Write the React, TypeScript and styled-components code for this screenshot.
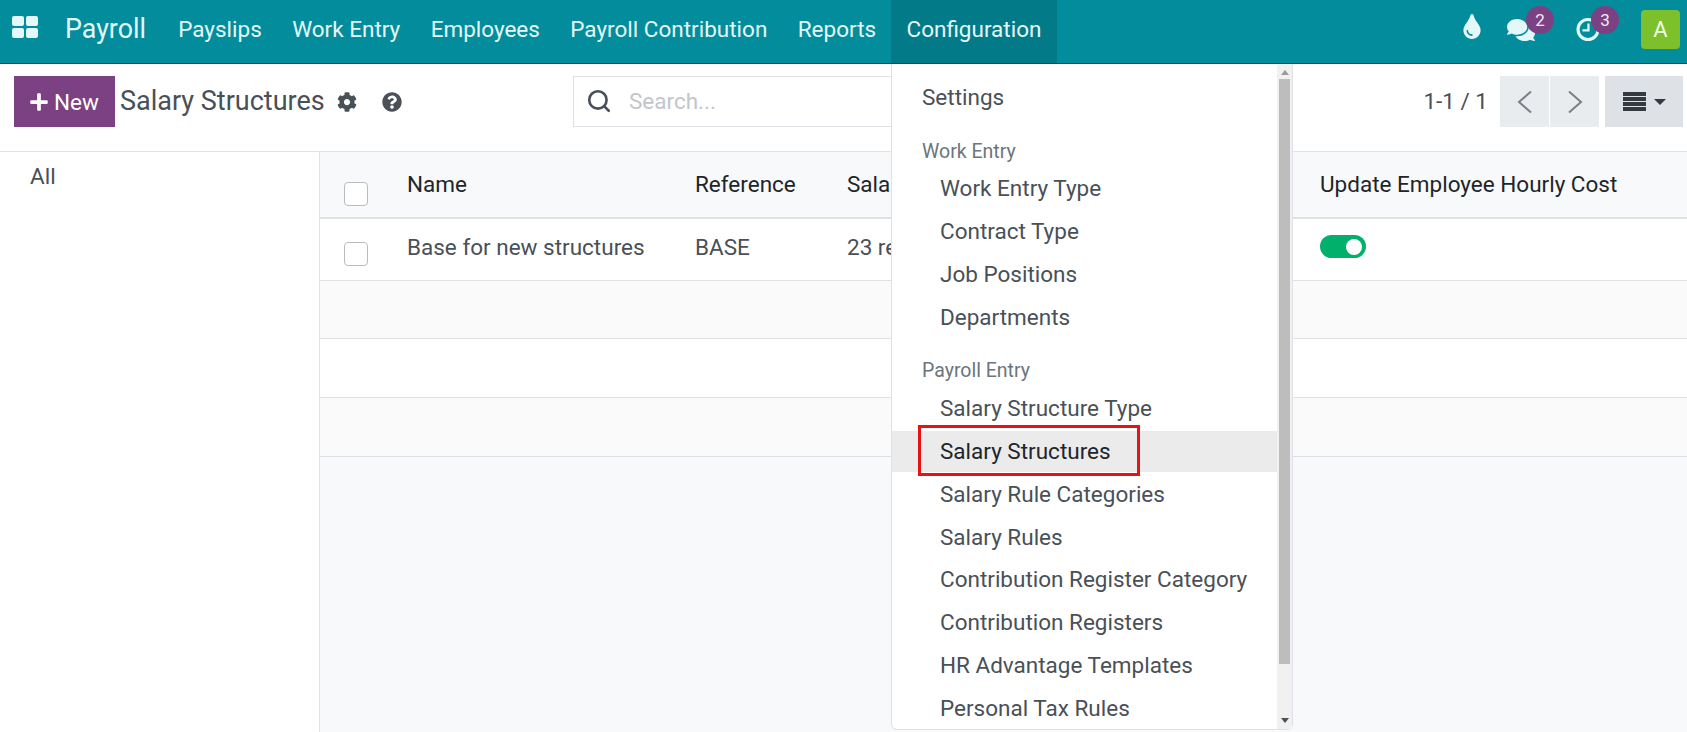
import styled, { createGlobalStyle } from "styled-components";
import { FaTint, FaComments, FaCog, FaQuestionCircle, FaPlus } from "react-icons/fa";
import { Search } from "lucide-react";

const GlobalStyle = createGlobalStyle`
  html, body {
    margin: 0;
    padding: 0;
    height: 100%;
    background: #fff;
    overflow: hidden;
  }
  * { box-sizing: border-box; }
  body {
    font-family: Roboto, "Liberation Sans", sans-serif;
    color: #495057;
  }
`;

const navItems = ["Payslips", "Work Entry", "Employees", "Payroll Contribution", "Reports"];

const App = () => {
  return (
    <Page>
      <GlobalStyle />
      <Navbar>
        <AppsButton aria-label="Apps">
          <svg width="26" height="22" viewBox="0 0 26 22" fill="#e4f8f9">
            <rect x="0" y="0" width="12" height="10" rx="2" />
            <rect x="14" y="0" width="12" height="10" rx="2" />
            <rect x="0" y="12" width="12" height="10" rx="2" />
            <rect x="14" y="12" width="12" height="10" rx="2" />
          </svg>
        </AppsButton>
        <Brand>Payroll</Brand>
        {navItems.map((item) => (
          <NavItem key={item}>{item}</NavItem>
        ))}
        <NavItem $active>Configuration</NavItem>
        <Systray>
          <TrayIcon $width={18} $lift={6}>
            <FaTint size={25} />
          </TrayIcon>
          <TrayIcon $width={28} $gap={26}>
            <FaComments size={28} />
            <Badge $left={19}>2</Badge>
          </TrayIcon>
          <TrayIcon $width={24} $gap={41}>
            <svg width="25" height="25" viewBox="0 0 26 26" fill="none" stroke="#e4f8f9" strokeWidth="3.4">
              <circle cx="13" cy="13" r="10.8" />
              <path d="M13.5 6.5v7.5H7" strokeWidth="2.4" />
            </svg>
            <Badge $left={15}>3</Badge>
          </TrayIcon>
          <Avatar>A</Avatar>
        </Systray>
      </Navbar>

      <ControlPanel>
        <TitleGroup>
          <NewButton>
            <FaPlus size={20} />
            New
          </NewButton>
          <Title>Salary Structures</Title>
          <FaCog size={20} />
          <HelpIcon size={20} />
        </TitleGroup>
        <SearchBox>
          <Search size={26} strokeWidth={2.4} color="#495057" />
          <SearchText>Search...</SearchText>
        </SearchBox>
        <Pager>1-1 / 1</Pager>
        <PagerButton $side="left">
          <svg width="16" height="24" viewBox="0 0 16 24" fill="none" stroke="#7b7f83" strokeWidth="2">
            <path d="M14 1.5 2 12l12 10.500" />
          </svg>
        </PagerButton>
        <PagerButton $side="right">
          <svg width="16" height="24" viewBox="0 0 16 24" fill="none" stroke="#7b7f83" strokeWidth="2">
            <path d="M2 1.500 14 12 2 22.500" />
          </svg>
        </PagerButton>
        <ViewButton>
          <svg width="23" height="19" viewBox="0 0 23 19" fill="#343a40">
            <rect y="0" width="23" height="4" />
            <rect y="5" width="23" height="4" />
            <rect y="10" width="23" height="4" />
            <rect y="15" width="23" height="4" />
          </svg>
          <Caret />
        </ViewButton>
      </ControlPanel>

      <Body>
        <Sidebar>
          <SidebarItem>All</SidebarItem>
        </Sidebar>
        <ListArea>
          <HeadRow>
            <Cell>
              <CheckBox $offset={20} />
            </Cell>
            <HeadCell>Name</HeadCell>
            <HeadCell>Reference</HeadCell>
            <HeadCell>Sala</HeadCell>
            <HeadCell>Update Employee Hourly Cost</HeadCell>
          </HeadRow>
          <DataRow>
            <Cell>
              <CheckBox $offset={15} />
            </Cell>
            <DataCell>Base for new structures</DataCell>
            <DataCell>BASE</DataCell>
            <DataCell>23 re</DataCell>
            <Cell>
              <Toggle />
            </Cell>
          </DataRow>
          <EmptyRow $shade $height={58} />
          <EmptyRow $height={59} />
          <EmptyRow $shade $height={59} />
        </ListArea>
      </Body>

      <Menu>
        <MenuList>
          <MenuEntry>Settings</MenuEntry>
          <MenuHeader>Work Entry</MenuHeader>
          <MenuEntry $sub>Work Entry Type</MenuEntry>
          <MenuEntry $sub>Contract Type</MenuEntry>
          <MenuEntry $sub>Job Positions</MenuEntry>
          <MenuEntry $sub>Departments</MenuEntry>
          <MenuHeader>Payroll Entry</MenuHeader>
          <MenuEntry $sub>Salary Structure Type</MenuEntry>
          <MenuEntry $sub $selected>
            Salary Structures
            <RedBox />
          </MenuEntry>
          <MenuEntry $sub>Salary Rule Categories</MenuEntry>
          <MenuEntry $sub>Salary Rules</MenuEntry>
          <MenuEntry $sub>Contribution Register Category</MenuEntry>
          <MenuEntry $sub>Contribution Registers</MenuEntry>
          <MenuEntry $sub>HR Advantage Templates</MenuEntry>
          <MenuEntry $sub>Personal Tax Rules</MenuEntry>
        </MenuList>
        <ScrollTrack>
          <ScrollArrow $up />
          <ScrollThumb />
          <ScrollArrow />
        </ScrollTrack>
      </Menu>
    </Page>
  );
};

const Page = styled.div`
  position: relative;
  width: 1687px;
  height: 732px;
  overflow: hidden;
  display: flex;
  flex-direction: column;
`;

const Navbar = styled.header`
  height: 64px;
  flex: none;
  display: flex;
  align-items: stretch;
  background: #028c9c;
  border-bottom: 1px solid #035560;
  color: #e4f8f9;
  font-size: 22.5px;
`;

const AppsButton = styled.div`
  width: 65px;
  display: flex;
  padding: 16px 0 0 12px;
`;

const Brand = styled.div`
  font-size: 26.800px;
  display: flex;
  align-items: center;
  margin-right: 17px;
  padding-bottom: 5px;
`;

const NavItem = styled.div<{ $active?: boolean }>`
  display: flex;
  align-items: center;
  padding: 0 15.200px 6px;
  background: ${(p) => (p.$active ? "#027a88" : "transparent")};
`;

const Systray = styled.div`
  margin-left: auto;
  display: flex;
  align-items: center;
  padding: 0 7px 4px 0;
`;

const TrayIcon = styled.div<{ $width: number; $gap?: number; $lift?: number }>`
  position: relative;
  width: ${(p) => p.$width}px;
  height: 26px;
  margin-left: ${(p) => p.$gap ?? 0}px;
  margin-bottom: ${(p) => p.$lift ?? 0}px;
  display: flex;
  align-items: center;
  justify-content: center;
`;

const Badge = styled.span<{ $left: number }>`
  position: absolute;
  top: -10.500px;
  left: ${(p) => p.$left}px;
  width: 28px;
  height: 28px;
  border-radius: 50%;
  background: #7c4182;
  color: #f3e9f4;
  font-size: 17px;
  display: flex;
  align-items: center;
  justify-content: center;
`;

const Avatar = styled.div`
  width: 39px;
  height: 39px;
  margin-left: 41px;
  border-radius: 4px;
  background: #7cc02b;
  color: #f4fbe9;
  font-size: 22px;
  display: flex;
  align-items: center;
  justify-content: center;
`;

const ControlPanel = styled.div`
  height: 88px;
  flex: none;
  display: flex;
  align-items: flex-start;
  padding: 12px 4px 0 14px;
  background: #fff;
  border-bottom: 1px solid #dee2e6;
`;

const TitleGroup = styled.div`
  flex: 0 0 559px;
  height: 51px;
  display: flex;
  align-items: center;
  color: #495057;
`;

const NewButton = styled.div`
  width: 101px;
  height: 51px;
  background: #7c4182;
  color: #fff;
  font-size: 22.500px;
  display: flex;
  align-items: center;
  gap: 5px;
  padding-left: 15px;
`;

const Title = styled.div`
  font-size: 27px;
  margin: 0 12px 2px 5px;
  color: #495057;
`;

const HelpIcon = styled(FaQuestionCircle)`
  margin-left: 25px;
`;

const SearchBox = styled.div`
  width: 707px;
  height: 51px;
  border: 1px solid #dee2e6;
  display: flex;
  align-items: center;
  padding: 0 0 2px 12px;
  gap: 17px;
`;

const SearchText = styled.span`
  font-size: 22.500px;
  color: #c1c6cb;
`;

const Pager = styled.div`
  margin-left: auto;
  height: 51px;
  display: flex;
  align-items: center;
  font-size: 22.500px;
  margin-right: 12px;
  padding-bottom: 2px;
`;

const PagerButton = styled.div<{ $side: "left" | "right" }>`
  width: ${(p) => (p.$side === "left" ? 50 : 49)}px;
  height: 51px;
  background: #e9ecef;
  border-right: ${(p) => (p.$side === "left" ? "1px solid #fff" : "none")};
  display: flex;
  align-items: center;
  justify-content: center;
`;

const ViewButton = styled.div`
  width: 78px;
  height: 51px;
  margin-left: 6px;
  background: #dee2e6;
  display: flex;
  align-items: center;
  justify-content: center;
  gap: 8px;
`;

const Caret = styled.span`
  width: 0;
  height: 0;
  border-left: 6px solid transparent;
  border-right: 6px solid transparent;
  border-top: 6px solid #343a40;
`;

const Body = styled.div`
  flex: 1;
  display: flex;
  min-height: 0;
`;

const Sidebar = styled.aside`
  width: 320px;
  flex: none;
  background: #fff;
  border-right: 1px solid #dee2e6;
`;

const SidebarItem = styled.div`
  font-size: 22.500px;
  padding: 11px 0 0 30px;
  color: #495057;
`;

const ListArea = styled.main`
  flex: 1;
  background: #f8f9fa;
`;

const columns = "87px 288px 152px 473px 1fr";

const HeadRow = styled.div`
  height: 67px;
  display: grid;
  grid-template-columns: ${columns};
  background: #f8f9fa;
  border-bottom: 2px solid #dee2e6;
  padding-bottom: 2px;
`;

const DataRow = styled.div`
  height: 62px;
  display: grid;
  grid-template-columns: ${columns};
  background: #fff;
  border-bottom: 1px solid #dee2e6;
  padding-bottom: 6px;
`;

const EmptyRow = styled.div<{ $shade?: boolean; $height: number }>`
  height: ${(p) => p.$height}px;
  background: ${(p) => (p.$shade ? "#fafafa" : "#fff")};
  border-bottom: 1px solid #dee2e6;
`;

const Cell = styled.div`
  display: flex;
  align-items: center;
  padding-left: 24px;
  &:not(:first-child) {
    padding-left: 0;
  }
`;

const HeadCell = styled.div`
  display: flex;
  align-items: center;
  font-size: 22.500px;
  color: #212529;
  white-space: nowrap;
`;

const DataCell = styled.div`
  display: flex;
  align-items: center;
  font-size: 22.500px;
  color: #495057;
  white-space: nowrap;
`;

const CheckBox = styled.span<{ $offset: number }>`
  width: 24px;
  height: 24px;
  margin-top: ${(p) => p.$offset}px;
  background: #fff;
  border: 1px solid #b8bcc0;
  border-radius: 4px;
`;

const Toggle = styled.span`
  position: relative;
  width: 46px;
  height: 23px;
  border-radius: 12px;
  background: #00b06b;
  &::after {
    content: "";
    position: absolute;
    top: 3.500px;
    right: 4px;
    width: 16px;
    height: 16px;
    border-radius: 50%;
    background: #fff;
  }
`;

const Menu = styled.nav`
  position: absolute;
  top: 64px;
  left: 891px;
  width: 402px;
  height: 666px;
  display: flex;
  background: #fff;
  border: 1px solid #dee2e6;
  border-top: none;
  border-radius: 0 0 6px 6px;
`;

const MenuList = styled.div`
  flex: 1;
  padding-top: 12px;
`;

// the selected row's grey starts a little below the row box, hence the clip
const MenuEntry = styled.div<{ $sub?: boolean; $selected?: boolean }>`
  position: relative;
  height: 42.900px;
  display: flex;
  align-items: center;
  padding-left: ${(p) => (p.$sub ? 48 : 30)}px;
  font-size: 22.500px;
  white-space: nowrap;
  color: ${(p) => (p.$selected ? "#212529" : "#495057")};
  ${(p) =>
    p.$selected &&
    `
    background: #ebebeb;
    background-clip: padding-box;
    border-top: 2px solid transparent;
    padding-bottom: 2px;
  `}
`;

const MenuHeader = styled.div`
  height: 31px;
  margin-top: 17px;
  padding-left: 30px;
  display: flex;
  align-items: center;
  font-size: 19.500px;
  color: #6c757d;
`;

const RedBox = styled.span`
  position: absolute;
  left: 26px;
  top: -6px;
  width: 222px;
  height: 51px;
  border: 3px solid #e51313;
`;

const ScrollTrack = styled.div`
  width: 15px;
  flex: none;
  display: flex;
  flex-direction: column;
  align-items: center;
  background: #f1f1f1;
`;

const ScrollThumb = styled.div`
  width: 11px;
  flex: 1;
  margin: 0 0 54px;
  background: #bdbdbd;
`;

const ScrollArrow = styled.span<{ $up?: boolean }>`
  width: 0;
  height: 0;
  border-left: 4px solid transparent;
  border-right: 4px solid transparent;
  ${(p) => (p.$up ? "border-bottom: 5px solid #9a9a9a; margin: 6px 0 4px;" : "border-top: 5px solid #505050; margin-bottom: 6px;")}
`;

export default App;
